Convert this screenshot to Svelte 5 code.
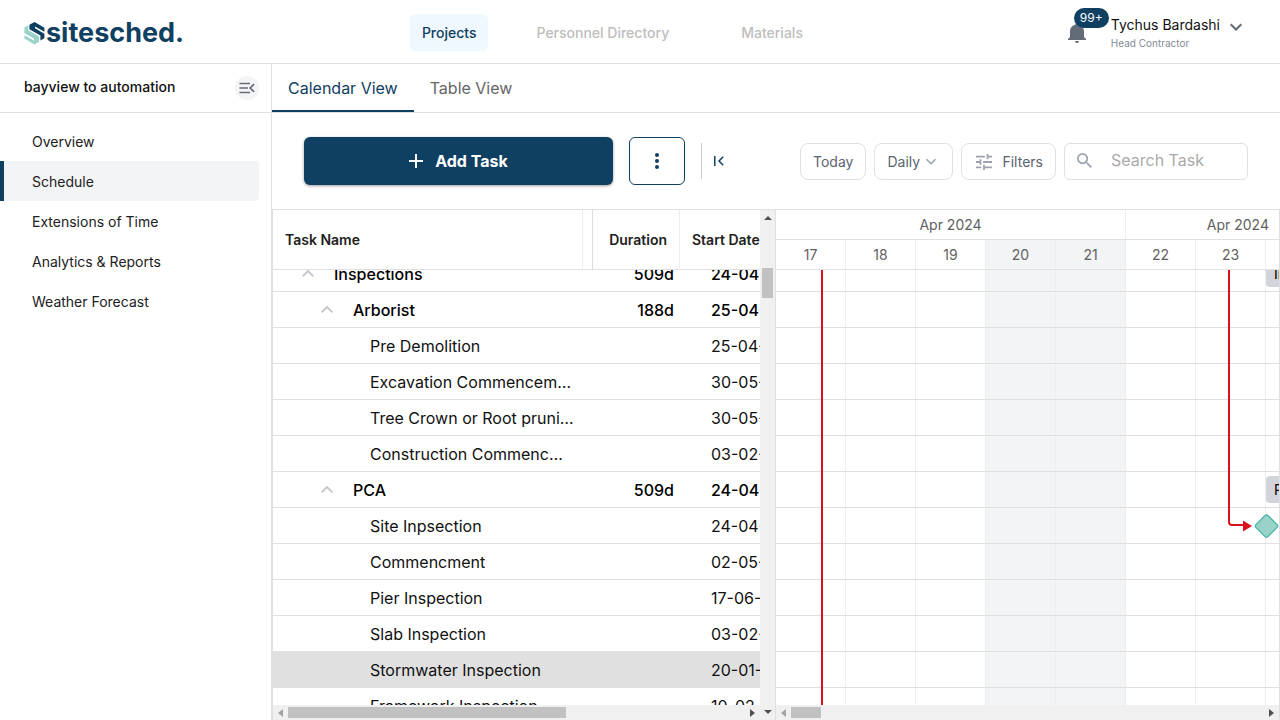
<script>
  const nav = ['Projects', 'Personnel Directory', 'Materials'];
  const side = ['Overview', 'Schedule', 'Extensions of Time', 'Analytics & Reports', 'Weather Forecast'];
  const tasks = [
    { name: 'Inspections', level: 1, duration: '509d', start: '24-04-24', bar: true },
    { name: 'Arborist', level: 2, duration: '188d', start: '25-04-24' },
    { name: 'Pre Demolition', level: 3, start: '25-04-24' },
    { name: 'Excavation Commencement', level: 3, start: '30-05-24' },
    { name: 'Tree Crown or Root pruning', level: 3, start: '30-05-24' },
    { name: 'Construction Commencment', level: 3, start: '03-02-25' },
    { name: 'PCA', level: 2, duration: '509d', start: '24-04-24', bar: true },
    { name: 'Site Inpsection', level: 3, start: '24-04-24' },
    { name: 'Commencment', level: 3, start: '02-05-24' },
    { name: 'Pier Inspection', level: 3, start: '17-06-24' },
    { name: 'Slab Inspection', level: 3, start: '03-02-25' },
    { name: 'Stormwater Inspection', level: 3, start: '20-01-25', selected: true },
    { name: 'Framework Inspection', level: 3, start: '10-02-25' },
    { name: 'Waterproofing', level: 3, start: '24-03-25' }
  ];
  const days = [17, 18, 19, 20, 21, 22, 23, 24];
  const weekend = (d) => d === 20 || d === 21;

  let activeNav = $state('Projects');
  let activeSide = $state('Schedule');
  let activeTab = $state('Calendar View');
  let search = $state('');
  let scale = $state('Daily');
  let leftPane;
  let rightPane;

  $effect(() => {
    leftPane.scrollTop = 14;
    rightPane.scrollTop = 14;
  });
</script>

<div class="app">
  <header class="top">
    <a class="logo" href="#home" aria-label="sitesched home">
      <svg width="22" height="24" viewBox="0 0 22 24" aria-hidden="true">
        <path fill="#98d2c9" d="M0.400 6.500 4.200 4.200V9.200L15 15.600V20.800L10.400 23.400 0.400 17.600V14.200L10.200 19.800V17.800L0.400 12Z" />
        <path fill="#0f4062" d="M5.400 3.800 10.600 1 20.400 6.800V10.800L11 5.400V7.200L20.400 12.800V17.200L16.400 19.600V14.600L5.400 8.200Z" />
      </svg>
      <span>sitesched.</span>
    </a>
    <nav class="nav">
      {#each nav as item}
        <a href="#{item}" class:active={activeNav === item} onclick={() => (activeNav = item)}>{item}</a>
      {/each}
    </nav>
    <div class="user">
      <button class="bell" aria-label="Notifications">
        <svg width="18" height="20" viewBox="0 0 18 20" aria-hidden="true">
          <path fill="#646b78" d="M9 20a2 2 0 0 0 2-2H7a2 2 0 0 0 2 2zM16 14V8.500c0-3.300-2-6-5.300-6.700V1.500a1.700 1.500 0 0 0-3.400 0v.3C4 2.500 2 5.200 2 8.500V14l-2 2v1h18v-1z" />
        </svg>
        <span class="badge">99+</span>
      </button>
      <div class="who">
        <span class="person">Tychus Bardashi</span>
        <span class="role">Head Contractor</span>
      </div>
      <button class="plain caret" aria-label="Account menu">
        <svg width="12" height="8" viewBox="0 0 12 8" aria-hidden="true"><path d="M.7 1.200 6 6.500l5.300-5.300" fill="none" stroke="#646b78" stroke-width="2" /></svg>
      </button>
    </div>
  </header>

  <div class="main">
    <aside class="side">
      <div class="project">
        <span>bayview to automation</span>
        <button class="collapse" aria-label="Collapse menu">
          <svg width="16" height="12" viewBox="0 0 16 12" aria-hidden="true"><path d="M.5 1.500h10.500M.5 6h8.500M.5 10.500h10.500M15 2.200 11.200 6l3.800 3.800" fill="none" stroke="#646b78" stroke-width="1.700" /></svg>
        </button>
      </div>
      <nav class="menu">
        {#each side as item}
          <a href="#{item}" class:active={activeSide === item} onclick={() => (activeSide = item)}>{item}</a>
        {/each}
      </nav>
    </aside>

    <section class="content">
      <div class="tabs" role="tablist">
        {#each ['Calendar View', 'Table View'] as tab}
          <button role="tab" aria-selected={activeTab === tab} class:active={activeTab === tab} onclick={() => (activeTab = tab)}>{tab}</button>
        {/each}
      </div>

      <div class="toolbar">
        <button class="add">
          <svg width="14" height="14" viewBox="0 0 14 14" aria-hidden="true"><path d="M7 0v14M0 7h14" stroke="#fff" stroke-width="2" /></svg>
          Add Task
        </button>
        <button class="more" aria-label="More actions">
          <svg width="4" height="16" viewBox="0 0 4 16" aria-hidden="true"><g fill="#0f4062"><circle cx="2" cy="2" r="2" /><circle cx="2" cy="8" r="2" /><circle cx="2" cy="14" r="2" /></g></svg>
        </button>
        <div class="fold">
          <button class="plain" aria-label="Collapse table">
            <svg width="10" height="10" viewBox="0 0 10 10" aria-hidden="true"><path d="M.8 0v10M9.200.8 5 5l4.200 4.200" fill="none" stroke="#0f4062" stroke-width="1.500" /></svg>
          </button>
        </div>
        <div class="tools">
          <button class="tool">Today</button>
          <div class="tool pick">
            <select aria-label="Scale" bind:value={scale}>
              <option>Daily</option><option>Weekly</option><option>Monthly</option>
            </select>
            <svg width="12" height="8" viewBox="0 0 12 8" aria-hidden="true"><path d="M1.500 1.200 6 5.700l4.500-4.500" fill="none" stroke="#9ca3af" stroke-width="1.600" /></svg>
          </div>
          <button class="tool filters">
            <svg width="16" height="16" viewBox="3 3 18 18" aria-hidden="true"><path fill="#9ca3af" d="M3 17v2h6v-2H3zM3 5v2h10V5H3zm10 16v-2h8v-2h-8v-2h-2v6h2zM7 9v2H3v2h4v2h2V9H7zm14 4v-2H11v2h10zm-6-4h2V7h4V5h-4V3h-2v6z" /></svg>
            Filters
          </button>
          <label class="search">
            <svg width="15" height="15" viewBox="3 3 17.500 17.500" aria-hidden="true"><path fill="#9ca3af" d="M15.500 14h-.79l-.28-.27A6.470 6.470 0 0 0 16 9.500 6.500 6.500 0 1 0 9.500 16c1.610 0 3.090-.59 4.230-1.570l.27.28v.79l5 4.990L20.490 19l-4.990-5zm-6 0C7.010 14 5 11.990 5 9.500S7.010 5 9.500 5 14 7.010 14 9.500 11.990 14 9.500 14z" /></svg>
            <input type="text" placeholder="Search Task" aria-label="Search Task" bind:value={search} />
          </label>
        </div>
      </div>

      <div class="gantt">
        <div class="left">
          <div class="stack">
            <div class="pane" bind:this={leftPane}>
              <table>
                <colgroup><col class="c-name" /><col class="c-gap" /><col class="c-dur" /><col class="c-start" /></colgroup>
                <thead>
                  <tr><th class="h-name">Task Name</th><th class="h-gap"></th><th class="h-dur">Duration</th><th class="h-start">Start Date</th></tr>
                </thead>
                <tbody>
                  {#each tasks as t}
                    <tr class:parent={t.level < 3} class:selected={t.selected}>
                      <td>
                        <div class="cell level{t.level}">
                          {#if t.level < 3}
                            <button class="plain" aria-label="Toggle {t.name}">
                              <svg width="12" height="7" viewBox="0 0 12 7" aria-hidden="true"><path d="M.7 6.300 6 1l5.300 5.300" fill="none" stroke="#c4c7cb" stroke-width="1.900" /></svg>
                            </button>
                          {/if}
                          <span>{t.name}</span>
                        </div>
                      </td>
                      <td></td>
                      <td class="dur">{t.duration ?? ''}</td>
                      <td class="start">{t.start}</td>
                    </tr>
                  {/each}
                </tbody>
              </table>
            </div>
            <div class="hbar">
              <svg width="5" height="8" viewBox="0 0 5 8" aria-hidden="true"><path fill="#a3a3a3" d="M5 0v8L0 4z" /></svg>
              <i class="thumb wide"></i>
              <svg width="5" height="8" viewBox="0 0 5 8" aria-hidden="true"><path fill="#505050" d="M0 0v8l5-4z" /></svg>
            </div>
          </div>
          <div class="vbar">
            <svg width="8" height="4" viewBox="0 0 8 4" aria-hidden="true"><path fill="#505050" d="M0 4h8L4 0z" /></svg>
            <i class="thumb"></i>
            <svg width="8" height="4" viewBox="0 0 8 4" aria-hidden="true"><path fill="#505050" d="M0 0h8L4 4z" /></svg>
          </div>
        </div>

        <div class="right">
          <div class="months"><span class="first">Apr 2024</span><span class="second">Apr 2024</span></div>
          <div class="days">
            {#each days as d}<span class:weekend={weekend(d)}>{d}</span>{/each}
          </div>
          <div class="pane chart-pane" bind:this={rightPane}>
            <div class="chart">
              <div class="columns">
                {#each days as d}<i class:weekend={weekend(d)}></i>{/each}
              </div>
              {#each tasks as t}
                <div class="line">{#if t.bar}<span class="bar">{t.name}</span>{/if}</div>
              {/each}
              <svg class="links" width="504" height="504" viewBox="0 0 504 504" aria-hidden="true">
                <path d="M46 0V504M453 0V266a3 3 0 0 0 3 3H468" fill="none" stroke="#d9101e" stroke-width="2" />
                <path d="M467 264.500v11l9-5.500z" fill="#d9101e" />
                <rect x="482" y="261.500" width="17" height="17" rx="2" transform="rotate(45 490.500 270)" fill="#98d2c9" stroke="#30ad9b" />
              </svg>
            </div>
          </div>
          <div class="hbar">
            <svg width="5" height="8" viewBox="0 0 5 8" aria-hidden="true"><path fill="#a3a3a3" d="M5 0v8L0 4z" /></svg>
            <i class="thumb short"></i>
            <svg width="5" height="8" viewBox="0 0 5 8" aria-hidden="true"><path fill="#505050" d="M0 0v8l5-4z" /></svg>
          </div>
        </div>
      </div>
    </section>
  </div>
</div>

<style>
  :global(body) { margin: 0; background: #fff; }
  .app, .app * { box-sizing: border-box; }
  .app {
    display: flex; flex-direction: column; height: 100vh; overflow: hidden;
    font: 14px/20px Inter, Roboto, sans-serif; color: #111827;
  }
  button, input, select { font: inherit; color: inherit; margin: 0; }
  button { cursor: pointer; }
  a { text-decoration: none; color: inherit; }
  svg { display: block; flex: none; }
  .plain { border: 0; background: none; padding: 0; }

  .top {
    flex: none; display: flex; justify-content: space-between; align-items: center;
    height: 64px; padding: 2px 24px 0; border-bottom: 1px solid #e0e0e0;
  }
  .logo { display: flex; align-items: center; width: 159px; color: #0f4062; font-size: 27px; line-height: 32px; font-weight: 700; }
  .nav { display: flex; align-items: center; gap: 24px; font-weight: 500; color: #bdbdbd; }
  .nav a { padding: 8px 24px; line-height: 21px; border-radius: 6px; }
  .nav .active { padding: 8px 12px; color: #0f4062; background: #eff7ff; }
  .user { display: flex; align-items: center; padding: 0 14px 0 12px; }
  .bell { position: relative; width: 45px; padding: 0 0 0 2px; border: 0; background: none; }
  .badge {
    position: absolute; left: 8px; top: -15px; padding: 0 6px; border-radius: 10px;
    background: #0f4062; color: #fff; font-size: 12px; line-height: 20px;
  }
  .who { display: flex; flex-direction: column; margin-right: 10px; }
  .person { line-height: 20px; color: #111; }
  .role { font-size: 10px; line-height: 16px; color: #858b97; }
  .caret { align-self: flex-start; padding-top: 8px; }

  .main { flex: 1; display: flex; min-height: 0; }
  .side { flex: none; width: 272px; border-right: 1px solid #e0e0e0; }
  .project {
    display: flex; align-items: center; justify-content: space-between; height: 49px;
    padding: 0 12px 0 24px; border-bottom: 1px solid #e0e0e0; font-weight: 500; color: #111;
  }
  .project span { padding-bottom: 2px; }
  .collapse {
    display: flex; align-items: center; justify-content: center; width: 24px; height: 24px;
    padding: 0; border: 0; border-radius: 12px; background: #f3f4f6;
  }
  .menu { display: flex; flex-direction: column; padding: 8px 12px 0 0; }
  .menu a { padding: 11px 28px 9px; border-left: 4px solid transparent; border-radius: 0 4px 4px 0; color: #212121; }
  .menu .active { background: #f3f4f6; border-left-color: #0f4062; }

  .content { flex: 1; display: flex; flex-direction: column; min-width: 0; }
  .tabs { flex: none; display: flex; height: 49px; border-bottom: 1px solid #e0e0e0; }
  .tabs button {
    padding: 2px 16px 0; border: 0; border-bottom: 2px solid transparent; background: none;
    font-size: 16px; color: #666;
  }
  .tabs .active { color: #0f4062; border-bottom-color: #0f4062; }

  .toolbar { flex: none; display: flex; align-items: center; gap: 16px; padding: 24px 32px; }
  .add {
    flex: 1; max-width: 309px; height: 48px; display: flex; align-items: center; justify-content: center; gap: 12px;
    border: 0; border-radius: 6px; background: #0f4062; color: #fff; font-size: 16px; font-weight: 700;
    box-shadow: 0 1px 3px rgba(0, 0, 0, 0.4);
  }
  .more {
    width: 56px; height: 48px; display: flex; align-items: center; justify-content: center;
    border: 1px solid #0f4062; border-radius: 6px; background: #fff;
  }
  .fold { display: flex; align-items: center; height: 36px; padding-left: 12px; border-left: 1px solid #ccc; }
  .tools { display: flex; gap: 8px; margin-left: auto; color: #5b6370; }
  .tool {
    display: flex; align-items: center; height: 37px; padding: 2px 12px 0;
    border: 1px solid #e0e0e0; border-radius: 8px; background: #fff;
  }
  .pick { padding-right: 15px; }
  .pick select { appearance: none; width: 38px; padding: 0; border: 0; background: none; outline: none; }
  .filters { gap: 10px; padding-left: 14px; }
  .search {
    display: flex; align-items: center; gap: 19px; width: 184px; height: 37px; padding: 0 12px 2px;
    border: 1px solid #e0e0e0; border-radius: 6px;
  }
  .search input { flex: 1; min-width: 0; padding: 0; border: 0; outline: none; background: none; font-size: 16px; }
  .search input::placeholder { color: #aaa; }

  .gantt { flex: 1; display: flex; min-height: 0; border: 1px solid #e0e0e0; border-bottom: 0; }
  .left { flex: none; display: flex; width: 503px; border-right: 1px solid #e0e0e0; }
  .stack { flex: 1; display: flex; flex-direction: column; min-width: 0; }
  .pane { flex: 1; min-height: 0; overflow: hidden; }

  table { width: 560px; table-layout: fixed; border-collapse: separate; border-spacing: 0; }
  .c-name { width: 310px; }
  .c-gap { width: 10px; }
  .c-dur { width: 87px; }
  th {
    position: sticky; top: 0; z-index: 1; height: 60px; padding: 0 12px; background: #fff;
    border-right: 1px solid #eee; border-bottom: 1px solid #e0e0e0; font-weight: 600; text-align: left; color: #212121;
  }
  .h-gap { padding: 0; border-right-color: #ddd; }
  .h-dur { text-align: right; }
  td { height: 36px; padding: 0; border-bottom: 1px solid #e0e0e0; font-size: 16px; color: #111; white-space: nowrap; }
  .parent td { font-weight: 500; color: #000; }
  .selected td { background: #e0e0e0; }
  .dur { text-align: right; padding-right: 6px; }
  .start { padding-left: 31px; }
  .cell { display: flex; align-items: center; gap: 20px; padding-right: 8px; }
  .cell span { overflow: hidden; text-overflow: ellipsis; }
  .level1 { padding-left: 29px; }
  .level2 { padding-left: 48px; }
  .level3 { padding-left: 97px; }

  .hbar, .vbar { flex: none; display: flex; align-items: center; background: #f0f0f0; }
  .hbar { height: 15px; padding: 0 5px; }
  .hbar svg:last-child { margin-left: auto; }
  .vbar { flex-direction: column; width: 15px; padding: 6px 0; }
  .vbar svg:last-child { margin-top: auto; }
  .thumb { background: #c1c1c1; }
  .hbar .thumb { height: 11px; margin-left: 5px; }
  .wide { width: 278px; }
  .short { width: 30px; }
  .vbar .thumb { width: 11px; height: 30px; margin-top: 48px; }

  .right { flex: 1; display: flex; flex-direction: column; min-width: 0; color: #616161; }
  .months, .days { flex: none; display: flex; height: 30px; overflow: hidden; border-bottom: 1px solid #e0e0e0; text-align: center; line-height: 29px; }
  .first { flex: none; width: 350px; border-right: 1px solid #eee; }
  .second { flex: 1; padding-right: 10px; text-align: right; }
  .days span, .columns i { flex: none; width: 70px; border-right: 1px solid #eee; }
  .days .weekend, .columns .weekend { background: #f3f4f6; }
  .chart { position: relative; overflow: hidden; }
  .columns { position: absolute; inset: 0; display: flex; }
  .line { position: relative; display: flex; align-items: center; height: 36px; padding-left: 490px; border-bottom: 1px solid #e0e0e0; }
  .bar {
    flex: none; width: 200px; height: 27px; padding-left: 8px; border-radius: 4px;
    background: #d1d5db; color: #000; font-size: 14px; line-height: 27px;
  }
  .links { position: absolute; left: 0; top: 0; }
</style>
